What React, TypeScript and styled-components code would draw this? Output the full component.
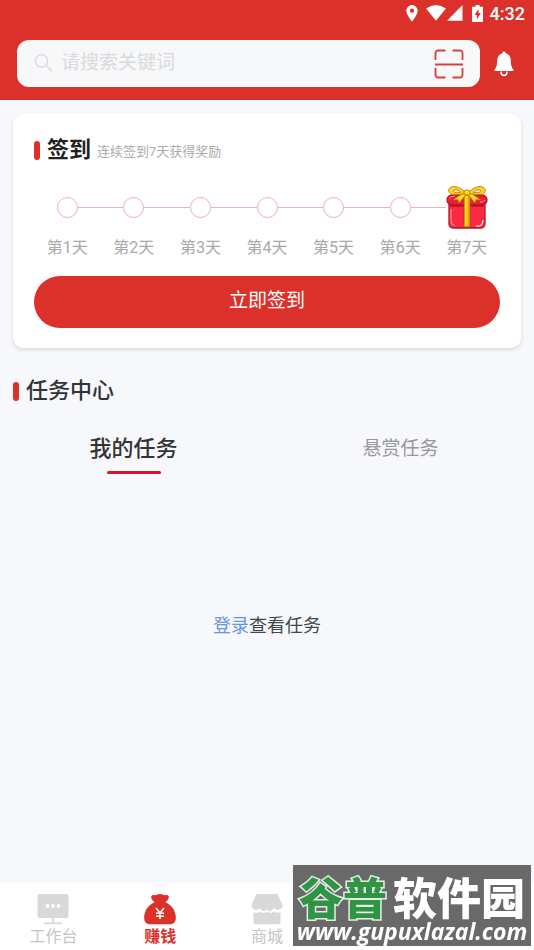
import React from "react";
import styled, { createGlobalStyle, css } from "styled-components";

const red = "#dc302a";

const GlobalStyle = createGlobalStyle`
  * { box-sizing: border-box; }
  body {
    margin: 0;
    background: #f7f8fc;
    font-family: Roboto, "Noto Sans CJK SC", sans-serif;
    color: #333;
  }
  button, input { font: inherit; border: 0; padding: 0; background: none; color: inherit; }
  h1, h2, p { margin: 0; }
  svg { display: block; flex: none; }
`;

const Page = styled.div`
  min-height: 100vh;
  display: flex;
  flex-direction: column;
`;

const Header = styled.header`
  background: ${red};
  color: #fff;
  padding-bottom: 13px;
`;

const StatusBar = styled.div`
  height: 28px;
  display: flex;
  align-items: center;
  justify-content: flex-end;
  padding-right: 9px;
`;

const Time = styled.span`
  font-size: 18px;
  line-height: 28px;
  font-weight: 500;
  margin-left: 7px;
`;

const SearchRow = styled.div`
  display: flex;
  align-items: center;
  gap: 14px;
  padding: 12px 20px 0 17px;
`;

const SearchBox = styled.label`
  flex: 1;
  min-width: 0;
  height: 47px;
  border-radius: 12px;
  background: #f7f8fa;
  display: flex;
  align-items: center;
  gap: 7px;
  padding: 0 16px 0 17px;
`;

const SearchInput = styled.input`
  flex: 1;
  min-width: 0;
  height: 28px;
  margin-bottom: 2px;
  font-size: 19px;
  color: #333;
  outline: none;
  &::placeholder { color: #d9dadb; opacity: 1; }
`;

const IconButton = styled.button`
  cursor: pointer;
  flex: none;
`;

const Main = styled.main`
  flex: 1;
  padding: 14px 13px 0;
`;

const Card = styled.section`
  background: #fff;
  border-radius: 10px;
  box-shadow: 0 2px 4px rgba(0, 0, 0, 0.12);
  padding: 20px 21px;
`;

const TitleRow = styled.div`
  display: flex;
  align-items: center;
`;

const Marker = styled.span`
  width: 6px;
  height: 19px;
  border-radius: 3px;
  background: ${red};
  margin-right: 7px;
`;

const Title = styled.h2<{ $dark?: boolean }>`
  font-size: 22px;
  line-height: 32px;
  font-weight: ${(p) => (p.$dark ? 700 : 500)};
  color: ${(p) => (p.$dark ? "#222" : "#333")};
`;

const Hint = styled.p`
  font-size: 13px;
  line-height: 20px;
  color: #aaa;
  margin: 4px 0 0 6px;
`;

const Days = styled.ol`
  list-style: none;
  margin: 18px 0 16px;
  padding: 0;
  display: grid;
  grid-template-columns: repeat(7, 1fr);
`;

const Day = styled.li`
  display: flex;
  flex-direction: column;
  align-items: center;
  gap: 6px;
`;

const Track = styled.div<{ $first: boolean; $last: boolean }>`
  width: 100%;
  height: 46px;
  display: flex;
  align-items: center;
  &::before, &::after {
    content: "";
    flex: 1;
    height: 1px;
    background: #eeb4b5;
  }
  ${(p) => p.$first && css`&::before { background: transparent; }`}
  ${(p) => p.$last && css`&::after { background: transparent; }`}
`;

const Dot = styled.span`
  width: 21px;
  height: 21px;
  border: 1px solid #f0aeb1;
  border-radius: 50%;
`;

const DayLabel = styled.span`
  font-size: 16px;
  line-height: 24px;
  color: #a9a9a9;
`;

const CheckIn = styled.button`
  display: block;
  width: 100%;
  height: 52px;
  border-radius: 26px;
  background: ${red};
  color: #fff;
  font-size: 19px;
  line-height: 50px;
  padding-bottom: 2px;
  cursor: pointer;
`;

const TaskSection = styled.section`
  padding-top: 27px;
`;

const Tabs = styled.div`
  display: grid;
  grid-template-columns: 1fr 1fr;
  margin: 27px -13px 0;
`;

const Tab = styled.button<{ $active?: boolean }>`
  display: flex;
  flex-direction: column;
  align-items: center;
  gap: 7px;
  line-height: 30px;
  cursor: pointer;
  font-size: ${(p) => (p.$active ? 22 : 19)}px;
  font-weight: ${(p) => (p.$active ? 500 : 400)};
  color: ${(p) => (p.$active ? "#333" : "#999")};
  &::after {
    content: "";
    width: 54px;
    height: 3px;
    border-radius: 2px;
    background: ${(p) => (p.$active ? "#d8132f" : "transparent")};
  }
`;

const Empty = styled.p`
  padding: 139px 0 40px;
  text-align: center;
  font-size: 18px;
  line-height: 26px;
  color: #40474f;
`;

const Login = styled.a`
  color: #6795e3;
  text-decoration: none;
`;

const Nav = styled.nav`
  height: 67px;
  background: #fff;
  display: grid;
  grid-template-columns: repeat(5, 1fr);
`;

const NavItem = styled.a<{ $active?: boolean }>`
  display: flex;
  flex-direction: column;
  align-items: center;
  padding-top: 10px;
  gap: 1px;
  text-decoration: none;
  font-size: 16px;
  line-height: 22px;
  font-weight: ${(p) => (p.$active ? 700 : 400)};
  color: ${(p) => (p.$active ? red : "#c6c6c6")};
`;

const Badge = styled.aside`
  position: fixed;
  right: 3px;
  bottom: 4px;
  width: 238px;
  height: 81px;
  background: #696969;
  color: #fff;
  white-space: nowrap;
`;

const BadgeName = styled.div`
  display: flex;
  justify-content: center;
  gap: 6px;
  padding-top: 8px;
  font-family: "Noto Sans CJK SC", sans-serif;
  font-style: oblique 8deg;
  font-size: 44px;
  line-height: 46px;
  font-weight: 900;
`;

const BadgeGreen = styled.span`
  color: #2f9444;
  -webkit-text-stroke: 3px #e4eee5;
  paint-order: stroke fill;
`;

const BadgeUrl = styled.div`
  text-align: center;
  font-family: "Open Sans", sans-serif;
  font-style: italic;
  font-size: 23px;
  line-height: 24px;
  font-weight: 700;
`;

const PinIcon = () => (
  <svg width="12" height="17" viewBox="0 0 12 17" fill="#fff">
    <path fillRule="evenodd" d="M6 0a5.6 5.6 0 0 0-5.6 5.7C.4 10 6 16.500 6 16.500s5.600-6.500 5.600-10.800A5.600 5.600 0 0 0 6 0Zm0 3.600a2.100 2.100 0 1 1 0 4.200 2.100 2.100 0 0 1 0-4.200Z" />
  </svg>
);

const WifiIcon = () => (
  <svg width="20" height="16" viewBox="0 0 20 16" fill="#fff">
    <path d="M0 3.500Q10-3.500 20 3.500L10 15.800Z" />
  </svg>
);

const SignalIcon = () => (
  <svg width="16" height="16" viewBox="0 0 16 16" fill="#fff">
    <path d="M15.500 0v15.700H0Z" />
  </svg>
);

const BatteryIcon = () => (
  <svg width="11" height="17" viewBox="0 0 11 17">
    <path fill="#fff" d="M3.500 0h4v1.700H11V17H0V1.700h3.500Z" />
    <path fill={red} d="M6.500 4 2.500 10h2.300v4.500l4-6.500H6.500Z" />
  </svg>
);

const SearchIcon = () => (
  <svg width="20" height="20" viewBox="0 0 20 20" fill="none" stroke="#d6d7d8" strokeWidth="1.300">
    <circle cx="7.500" cy="7" r="6.200" />
    <path d="m12 11.600 6 5.700" />
  </svg>
);

const ScanIcon = () => (
  <svg width="30" height="30" viewBox="0 0 30 30" fill="none" stroke="#d4403c" strokeWidth="1.800">
    <path d="M1.500 11V4a2.500 2.500 0 0 1 2.500-2.500h7.500M18.500 1.500H26A2.500 2.500 0 0 1 28.500 4v7M1.500 19v7A2.500 2.500 0 0 0 4 28.500h7.500M18.500 28.500H26a2.500 2.500 0 0 0 2.500-2.500v-7M1 15.500h28" />
  </svg>
);

const BellIcon = () => (
  <svg width="20" height="26" viewBox="0 0 20 26">
    <path fill="#fff" d="M10 .5c-1 0-1.700.7-1.600 1.700C5.200 3 3.300 5.600 3.200 9c-.1 5-.7 7.500-2.700 9.500V20h19v-1.500c-2-2-2.600-4.500-2.700-9.500-.1-3.400-2-6-5.200-6.800.1-1-.6-1.700-1.600-1.700Z" />
    <path fill="none" stroke="#fff" strokeWidth="1.600" d="M7 20.500c0 5.200 6 5.200 6 0" />
  </svg>
);

const GiftIcon = () => (
  <svg width="42" height="44" viewBox="0 0 42 44" strokeLinejoin="round">
    <rect x="3" y="16" width="36" height="27" rx="4" fill="#fb2a40" stroke="#b5152b" strokeWidth="1.300" />
    <path d="M4.500 19h33v3h-33Z" fill="#c9152d" />
    <path d="M5 24v12q0 4 4 4" fill="none" stroke="#ff8b96" strokeWidth="1.200" />
    <path d="M30 41q7 1 7-6" fill="none" stroke="#ffd6d9" strokeWidth="1.400" />
    <rect x="1" y="10" width="40" height="10" rx="5" fill="#ee1d36" stroke="#b5152b" strokeWidth="1.300" />
    <path d="M3 13q2-2 6-2M34 17q4 0 5-2" fill="none" stroke="#ff8b96" />
    <path d="M18 10h6v32h-6Z" fill="#fbd51b" stroke="#a84612" />
    <path d="M22.500 11v30" stroke="#f19a15" strokeWidth="1.500" />
    <g fill="#fcd81c" stroke="#b56f12" strokeWidth=".8">
      <path d="M18.500 7 7 15l5-.3 1 3.300 8-9.500Z" />
      <path d="M23.500 7 35 15l-5-.3-1 3.300-8-9.500Z" />
      <path d="M20 8.500C15 1.500 7 .2 4 2.800.5 6 4 10 9 9.500c4 0 7-.5 11-1ZM22 8.500C27 1.500 35 .2 38 2.800 41.500 6 38 10 33 9.500c-4 0-7-.5-11-1Z" />
      <path fill="#fff2c6" d="M15 7.300c-2-2.500-6-3.300-7.500-1.800s1.500 2.600 7.500 1.800ZM27 7.300c2-2.500 6-3.300 7.500-1.800s-1.500 2.600-7.500 1.800Z" />
      <rect x="18" y="5" width="6" height="5" rx="2" />
    </g>
  </svg>
);

const WorkbenchIcon = () => (
  <svg width="32" height="32" viewBox="0 0 32 32">
    <rect x=".5" y="1" width="31" height="24" rx="2" fill="#d9d9d9" />
    <path d="M16 24v6M7 30.300h18" stroke="#d9d9d9" strokeWidth="1.800" />
    <g fill="#fff">
      <circle cx="10.500" cy="13" r="1.900" />
      <circle cx="16" cy="13" r="1.900" />
      <circle cx="21.500" cy="13" r="1.900" />
    </g>
  </svg>
);

const MoneyIcon = () => (
  <svg width="32" height="32" viewBox="0 0 32 32">
    <path fill={red} d="M10.500 9.500 8 6.500C6 3.500 8 1.300 11 2.200 12.500 2.500 13 1 16 1s3.500 1.500 5 1.200c3-.9 5 1.300 3 4.300l-2.500 3C28 12 32 18 31.800 25c0 4-2.300 6.300-6.300 6.300H6.500C2.500 31.300.2 29 .2 25 0 18 4 12 10.500 9.500Z" />
    <path fill="none" stroke="#fff" strokeWidth="1.600" d="m12 15 4 5 4-5M16 20v6M12 20.300h8M12 23.200h8" />
  </svg>
);

const ShopIcon = () => (
  <svg width="32" height="32" viewBox="0 0 32 32" fill="#d9d9d9">
    <path d="M5.500 1h21L31.500 12c.5 5-6.500 6.500-8.500 3-2 3.500-5.500 4.500-7 1-2 3-5.500 2.500-7-1-2 3.500-9 2-8.500-3Z" />
    <path d="M2.500 19c3 1.300 5 .8 6.700-.8 2 2 4.800 2 6.800.3 2 1.700 4.800 1.700 6.800-.3 1.700 1.600 3.700 2.100 6.700.8v9.800a2.500 2.500 0 0 1-2.500 2.500H5a2.500 2.500 0 0 1-2.500-2.500Z" />
  </svg>
);

const StatusIcons = styled.div`
  display: flex;
  align-items: center;
  padding-bottom: 2px;
`;

const Spacer = styled.span<{ $w: number }>`
  width: ${(p) => p.$w}px;
`;

const days = [1, 2, 3, 4, 5, 6, 7];

export default function App() {
  return (
    <>
      <GlobalStyle />
      <Page>
        <Header>
          <StatusBar>
            <StatusIcons>
              <PinIcon />
              <Spacer $w={8} />
              <WifiIcon />
              <Spacer $w={1} />
              <SignalIcon />
              <Spacer $w={9} />
              <BatteryIcon />
            </StatusIcons>
            <Time>4:32</Time>
          </StatusBar>
          <SearchRow>
            <SearchBox>
              <SearchIcon />
              <SearchInput type="text" aria-label="搜索" placeholder="请搜索关键词" />
              <IconButton type="button" aria-label="扫一扫">
                <ScanIcon />
              </IconButton>
            </SearchBox>
            <IconButton type="button" aria-label="通知">
              <BellIcon />
            </IconButton>
          </SearchRow>
        </Header>

        <Main>
          <Card>
            <TitleRow>
              <Marker />
              <Title $dark>签到</Title>
              <Hint>连续签到7天获得奖励</Hint>
            </TitleRow>
            <Days>
              {days.map((day) => (
                <Day key={day}>
                  <Track $first={day === 1} $last={day === 7}>
                    {day === 7 ? <GiftIcon /> : <Dot />}
                  </Track>
                  <DayLabel>第{day}天</DayLabel>
                </Day>
              ))}
            </Days>
            <CheckIn type="button">立即签到</CheckIn>
          </Card>

          <TaskSection>
            <TitleRow>
              <Marker />
              <Title>任务中心</Title>
            </TitleRow>
            <Tabs role="tablist">
              <Tab type="button" role="tab" aria-selected="true" $active>
                我的任务
              </Tab>
              <Tab type="button" role="tab" aria-selected="false">
                悬赏任务
              </Tab>
            </Tabs>
            <Empty>
              <Login href="#login">登录</Login>查看任务
            </Empty>
          </TaskSection>
        </Main>

        <Nav>
          <NavItem href="#workbench">
            <WorkbenchIcon />
            工作台
          </NavItem>
          <NavItem href="#earn" $active aria-current="page">
            <MoneyIcon />
            赚钱
          </NavItem>
          <NavItem href="#shop">
            <ShopIcon />
            商城
          </NavItem>
        </Nav>
      </Page>
      <Badge>
        <BadgeName>
          <BadgeGreen>谷普</BadgeGreen>
          <span>软件园</span>
        </BadgeName>
        <BadgeUrl>www.gupuxlazal.com</BadgeUrl>
      </Badge>
    </>
  );
}
